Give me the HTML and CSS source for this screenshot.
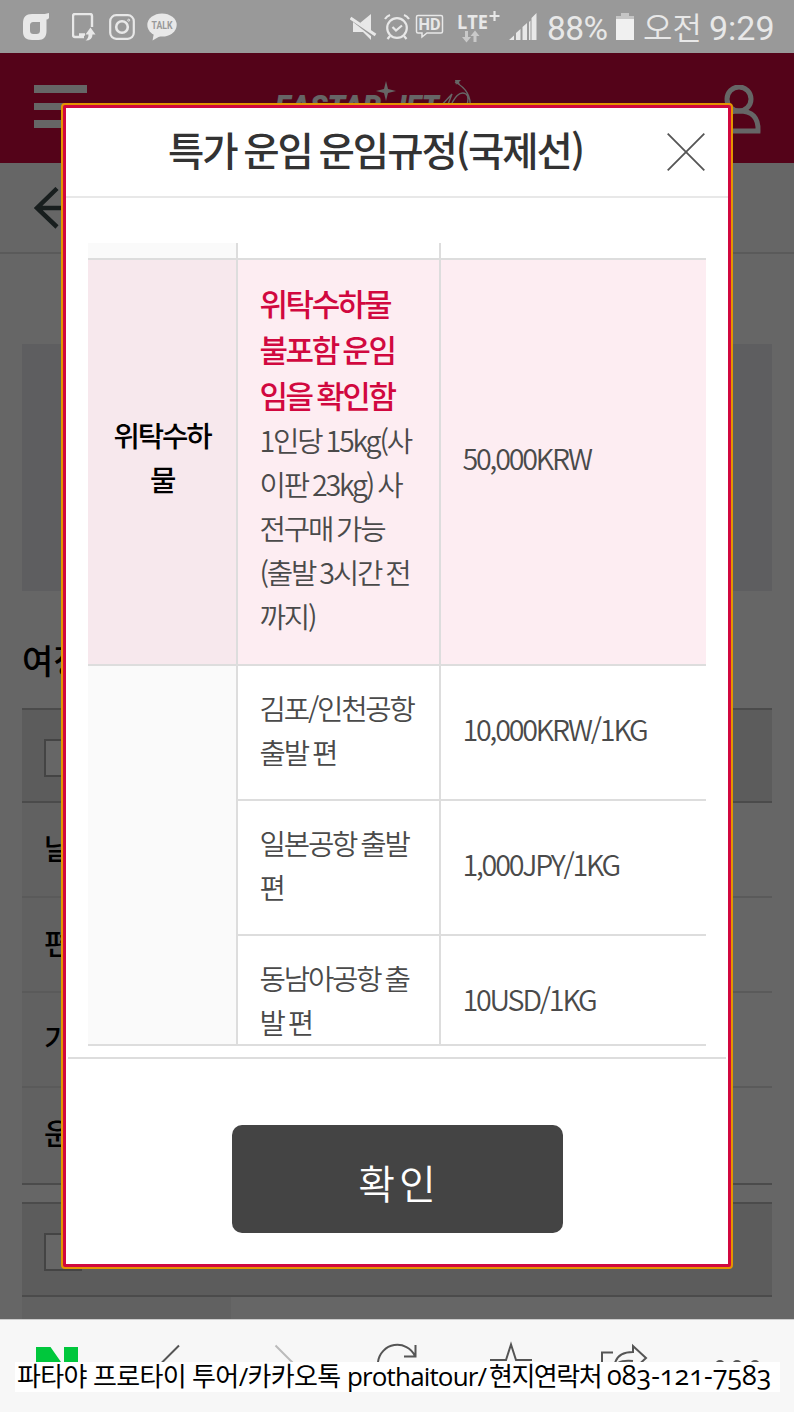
FILE: index.html
```html
<!DOCTYPE html>
<html lang="ko">
<head>
    <meta charset="UTF-8">
    <meta name="viewport" content="width=device-width, initial-scale=1.0">
    <title>특가 운임 운임규정(국제선)</title>
    <link rel="stylesheet" href="styles.css">
</head>
<body>

<div class="status-bar">
    <div class="status-left">
        <svg width="28" height="28" viewBox="0 0 28 28"><path d="M27 0v5q-1 1.500-2.500 1.500V18c0 6-3 9-8 9H10c-6 0-9-3-9-8v-9C1 4 4 1 10 1h8c4 0 6 0 9-1zM12 9c-3 0-4 1-4 4v4c0 3 1 4 4 4h2c3 0 4-1 4-4V9z" fill="#e8e8e8" fill-rule="evenodd"/></svg>
        <svg class="icon-doc" width="24" height="28" viewBox="0 0 24 28"><path d="M12 24H3Q1 24 1 22V3Q1 1 3 1H18Q20 1 20 3V14M7 21.500h6" fill="none" stroke="#e8e8e8" stroke-width="2.400"/><path d="M18.500 14.500l5 7h-3q0 6-7 6 3-2 3-6h-3z" fill="#e8e8e8"/></svg>
        <svg class="icon-insta" width="26" height="26" viewBox="0 0 26 26" fill="none" stroke="#e8e8e8"><rect x="1.200" y="1.200" width="23.600" height="23.600" rx="6" stroke-width="2.200"/><circle cx="13" cy="13" r="5.800" stroke-width="2.600"/><circle cx="19.700" cy="6.200" r="1" stroke-width="1"/></svg>
        <svg class="icon-talk" width="30" height="28" viewBox="0 0 30 28"><ellipse cx="15" cy="12" rx="14.700" ry="11.600" fill="#e8e8e8"/><path d="M7 20L5.500 27.500 15 22z" fill="#e8e8e8"/><text x="4.500" y="15.800" class="talk-text" textLength="21" lengthAdjust="spacingAndGlyphs">TALK</text></svg>
    </div>
    <div class="status-right">
        <svg width="28" height="28" viewBox="0 0 28 28"><path d="M21 1v18L10 10zM3 9l18 14v4l-8-8H3z" fill="#e8e8e8"/><path d="M.500 5l25 17" stroke="#e8e8e8" stroke-width="3"/></svg>
        <svg class="icon-alarm" width="26" height="28" viewBox="0 0 26 28" fill="none" stroke="#e8e8e8" stroke-width="2.200"><circle cx="13" cy="15" r="9.800"/><path d="M8.500 14l3.500 3.500 6-5M1 6q2-3 5-4M25 6q-2-3-5-4M6 23l-2.500 3M20 23l2.500 3"/></svg>
        <svg class="icon-hd" width="29" height="25" viewBox="0 0 29 25"><path d="M3 1.500h23q1.500 0 1.500 1.500v14.500q0 1.500-1.500 1.500H12l-5 4v-4H3q-1.500 0-1.500-1.500V3Q1.500 1.500 3 1.500z" fill="none" stroke="#e8e8e8" stroke-width="1.500"/><text x="3.500" y="16.200" class="hd-text" textLength="22" lengthAdjust="spacingAndGlyphs">HD</text></svg>
        <svg class="icon-lte" width="44" height="32" viewBox="0 0 44 32"><text x="0" y="17.500" class="lte-text" textLength="31" lengthAdjust="spacingAndGlyphs">LTE</text><path d="M37.500 0v10M32.500 5h10" stroke="#e8e8e8" stroke-width="2.200"/><path d="M9.500 20v6M18 31v-7" stroke="#c9c9c9" stroke-width="3"/><path d="M5 26h9l-4.500 5.500zM13.500 25h9L18 19.500z" fill="#c9c9c9"/></svg>
        <svg class="icon-signal" width="28" height="27" viewBox="0 0 28 27"><path d="M0 27l5-4.500V27zM7 27V20l4.500-4v11zM13.500 27V14l4.500-4V27zM20 27V9l1.500-1.500V27zM22.500 27V5L27.500 0v27z" fill="#e8e8e8"/></svg>
        <span class="percent">88%</span>
        <svg class="icon-battery" width="18" height="27" viewBox="0 0 18 27"><path d="M5 0h8v3h5v3H0V3h5z" fill="#c5c5c5"/><path d="M0 6h18v21H0z" fill="#f0f0f0"/></svg>
        <span class="ampm">오전</span>
        <span class="clock">9:29</span>
    </div>
</div>

<div class="page">
    <div class="site-header">
        <div class="menu"><i></i><i></i><i></i></div>
        <svg class="logo" width="200" height="44" viewBox="0 0 200 44">
            <text x="0" y="37" class="logo-text" textLength="106" lengthAdjust="spacingAndGlyphs">EASTAR</text>
            <text x="116" y="37" class="logo-text" textLength="48" lengthAdjust="spacingAndGlyphs">JET</text>
            <path d="M111 1l2 8 8 2-8 2-2 8-2-8-8-2 8-2z" fill="#fff"/>
            <path d="M164 28l13-14-7 18M195 28q2-17-15-26M174 30q8-21 17-16 4 3 0 14" fill="none" stroke="#fff" stroke-width="1.400"/>
            <path d="M180 0h6l-2 2 1 3-3-2-1 2z" fill="#fff"/>
        </svg>
        <svg class="user" width="48" height="50" viewBox="0 0 48 50" fill="none" stroke="#fff" stroke-width="5"><circle cx="25" cy="14" r="12"/><path d="M5 46q0-20 20-20t19 20z"/></svg>
    </div>
    <div class="sub-header">
        <svg width="50" height="42" viewBox="0 0 50 42" fill="none" stroke="#3c4c4c" stroke-width="4.500"><path d="M23 1.500L3 21l20 19M3 21h47"/></svg>
    </div>
    <div class="notice"></div>
    <h2>여정1</h2>
    <div class="trip">
        <div class="trip-head"><span class="box"></span></div>
        <div class="trip-row">날짜</div>
        <div class="trip-row">편명</div>
        <div class="trip-row">기종</div>
        <div class="trip-row">운임</div>
    </div>
    <div class="trip">
        <div class="trip-head"><span class="box"></span></div>
        <div class="trip-row"></div>
    </div>
    <div class="dim"></div>
</div>

<div class="modal">
    <div class="modal-header">
        <h1>특가 운임 운임규정(국제선)</h1>
        <svg class="close" width="38" height="38" viewBox="0 0 38 38"><path d="M.700.700l36.600 36.600M37.300.700L.700 37.300" stroke="#555" stroke-width="1.800"/></svg>
    </div>
    <div class="modal-body">
        <div class="fare-table">
            <div class="th first"></div><div class="td first"></div><div class="td first"></div>
            <div class="th pink">위탁수하<br>물</div>
            <div class="td pink">
                <div class="warn">위탁수하물<br>불포함 운임<br>임을 확인함</div>
                <div>1인당 15kg(사<br>이판 23kg) 사<br>전구매 가능<br>(출발 3시간 전<br>까지)</div>
            </div>
            <div class="td pink price">50,000KRW</div>
            <div class="th span"></div>
            <div class="td">김포/인천공항<br>출발 편</div>
            <div class="td price">10,000KRW/1KG</div>
            <div class="td">일본공항 출발<br>편</div>
            <div class="td price">1,000JPY/1KG</div>
            <div class="td">동남아공항 출<br>발 편</div>
            <div class="td price">10USD/1KG</div>
        </div>
    </div>
    <div class="modal-footer">
        <button type="button" class="btn">확인</button>
    </div>
</div>

<div class="toolbar">
    <svg class="tools" width="794" height="42" viewBox="0 0 794 42" fill="none" stroke="#555" stroke-width="2">
        <path d="M36 27h14.500l21 30H36zM64 27h14v30H64z" fill="#00c73c" stroke="none"/>
        <path d="M179 25.500l-24 24 24 24"/>
        <path d="M275.500 25.500l24 24-24 24" stroke="#bbb"/>
        <path d="M378 42a19.500 19.500 0 0 1 37-6M415.500 25v11.500H404"/>
        <path d="M490 40h16l5-15.500 5 15.500h16"/>
        <path d="M613 32.500h-11V50M615 43q3-11 18-11v-6l13 12-13 12"/>
        <path d="M618 43q5-3 15-2"/>
        <path d="M716 45a4 4 0 0 1 8 0M733 45a4 4 0 0 1 8 0M751 45a4 4 0 0 1 8 0"/>
    </svg>
    <div class="contact"><span class="ko">파타야 프로타이 투어/카카오톡</span><span class="en">prothaitour/</span><span class="ko2">현지연락처</span><span class="num">083-121-7583</span></div>
</div>

</body>
</html>
```
FILE: styles.css
```css
* {
    box-sizing: border-box;
}

body {
    margin: 0;
    width: 794px;
    height: 1412px;
    overflow: hidden;
    position: relative;
    font-family: "Noto Sans CJK KR", sans-serif;
    background: #fff;
    color: #000;
}

svg {
    display: block;
    flex: none;
}

/* phone status bar */
.status-bar {
    height: 53px;
    padding: 0 18px 0 22px;
    display: flex;
    justify-content: space-between;
    background: #999;
    color: #e8e8e8;
    font-family: Roboto, "Noto Sans CJK KR", sans-serif;
    font-size: 33px;
    line-height: 53px;
    white-space: nowrap;
}

.status-left, .status-right {
    display: flex;
    align-items: center;
}

.status-right {
    width: 426px;
}

.icon-doc { margin-left: 22px; }
.icon-insta { margin-left: 13px; }
.icon-talk { margin-left: 12px; }
.icon-alarm { margin-left: 6px; }
.icon-hd { margin-left: 5px; }
.icon-lte { margin-left: 13px; overflow: visible; }
.icon-signal { margin-left: 8px; }
.icon-battery { margin-left: 7px; }

.percent {
    margin-left: 10px;
    width: 62px;
    padding-top: 3px;
    font-size: 33.5px;
    font-weight: 400;
    letter-spacing: -0.6px;
}

.ampm {
    margin-left: 9px;
    width: 58px;
    padding-top: 5px;
    font-size: 32px;
    font-weight: 350;
}

.clock {
    margin-left: 8px;
    padding-top: 3px;
    font-size: 34px;
}

.talk-text {
    font: bold 10.5px Roboto, sans-serif;
    fill: #999;
}

.hd-text {
    font: bold 16px Roboto, sans-serif;
    fill: #e8e8e8;
}

.lte-text {
    font: bold 19px "Open Sans", sans-serif;
    fill: #e8e8e8;
}

/* page under the popup */
.page {
    height: 1266px;
    overflow: hidden;
    position: relative;
}

.dim {
    position: absolute;
    inset: 0;
    background: rgba(0, 0, 0, 0.6);
}

.site-header {
    height: 110px;
    padding: 27px 32px 0 34px;
    display: flex;
    background: #d1083f;
}

.menu {
    width: 53px;
    margin-top: 5px;
    display: flex;
    flex-direction: column;
    gap: 10px;
}

.menu i {
    height: 7.5px;
    background: #fff;
}

.logo {
    margin-left: 188px;
}

.logo-text {
    font: italic 900 31px Roboto, sans-serif;
    fill: #fff;
}

.user {
    margin: 5px 0 0 auto;
}

.sub-header {
    height: 91px;
    padding: 24px 34px;
    border-bottom: 2px solid #e0e0e0;
}

.notice {
    height: 247px;
    margin: 90px 22px 0;
    background: #eaecf0;
}

.page h2 {
    height: 117px;
    margin: 0 22px;
    padding-top: 45px;
    font-size: 34px;
    font-weight: 500;
    line-height: 48px;
}

.trip {
    margin: 0 22px 17px;
    border-top: 2px solid #bbb;
    border-bottom: 2px solid #bbb;
}

.trip-head {
    height: 93px;
    padding: 29px 22px;
    background: #e6e6e6;
    border-bottom: 2px solid #bbb;
}

.box {
    display: block;
    width: 38px;
    height: 38px;
    background: #fff;
    border: 2px solid #aaa;
}

.trip-row {
    height: 95px;
    padding-left: 22px;
    background: linear-gradient(to right, #f2f2f2 209px, #fff 209px);
    border-bottom: 2px solid #e0e0e0;
    font-size: 29px;
    font-weight: 500;
    line-height: 89px;
}

.trip-row:last-child {
    border-bottom: none;
}

/* popup */
.modal {
    position: absolute;
    left: 61px;
    top: 103px;
    width: 672px;
    height: 1166px;
    border: 2px solid #e59400;
    border-radius: 4px;
    background: #d1083f;
    padding: 3px;
    display: flex;
    flex-direction: column;
}

.modal-header {
    height: 90px;
    padding-right: 23px;
    background: #fff;
    border-bottom: 2px solid #e8e8e8;
    display: flex;
    align-items: center;
}

.modal-header h1 {
    margin: 0;
    padding: 0 0 6px 102px;
    width: 601px;
    font-size: 39.5px;
    font-weight: 500;
    letter-spacing: -2px;
    word-spacing: -2.5px;
    line-height: 80px;
    color: #333;
    white-space: nowrap;
}

.modal-body {
    height: 849px;
    padding: 45px 22px 0;
    background: #fff;
}

.fare-table {
    height: 803px;
    overflow: hidden;
    display: grid;
    grid-template-columns: 150px 203px 265px;
    grid-template-rows: 17px 405.5px 135px 135px 135px;
    border-bottom: 2px solid #ddd;
    font-size: 28.7px;
    font-weight: 350;
    line-height: 44px;
    letter-spacing: -2.2px;
    word-spacing: -1.8px;
    color: #4a4a4a;
    white-space: nowrap;
}

.th, .td {
    border-right: 2px solid #ddd;
    border-bottom: 2px solid #ddd;
}

.th {
    padding-bottom: 9px;
    background: #fafafa;
    color: #000;
    font-weight: 500;
    text-align: center;
    display: flex;
    align-items: center;
    justify-content: center;
}

.td {
    padding: 20px 0 0 21.5px;
}

.td.first, .th.first {
    padding: 0;
}

.td:nth-child(3), .price {
    border-right: none;
}

.price {
    padding: 0 0 7px 21.5px;
    display: flex;
    align-items: center;
}

.th.span {
    grid-row: span 3;
}

.pink {
    background: #fdedf2;
}

.th.pink {
    background: #f7e8ed;
}

.warn {
    color: #d1083f;
    font-size: 31px;
    font-weight: 500;
    line-height: 46px;
    letter-spacing: -2.4px;
}

.modal-footer {
    flex: 1;
    padding-top: 10px;
    background: #fff;
}

.modal-footer::before {
    content: "";
    display: block;
    height: 2px;
    margin: 0 2px 66px;
    background: #ddd;
}

.btn {
    display: block;
    width: 331px;
    height: 108px;
    margin: 0 auto;
    padding: 5px 0 0 4px;
    border: none;
    border-radius: 10px;
    background: #444;
    color: #fff;
    font-family: inherit;
    font-size: 40px;
    font-weight: 350;
    letter-spacing: 4px;
}

/* browser toolbar */
.toolbar {
    height: 93px;
    background: #f7f7f7;
    border-top: 1px solid #ccc;
}

.contact {
    width: 765px;
    height: 30px;
    margin-left: 15px;
    padding-left: 2px;
    display: flex;
    background: #fff;
    font-family: "Open Sans", "Noto Sans CJK KR", sans-serif;
    font-size: 26px;
    line-height: 29px;
    white-space: nowrap;
}

.ko {
    width: 330px;
    letter-spacing: -0.65px;
}

.en {
    width: 142px;
    letter-spacing: -0.85px;
}

.ko2 {
    width: 118px;
    letter-spacing: -1.5px;
}

.num {
    font-variant-numeric: oldstyle-nums;
    font-size: 27px;
    line-height: 26px;
}
```
